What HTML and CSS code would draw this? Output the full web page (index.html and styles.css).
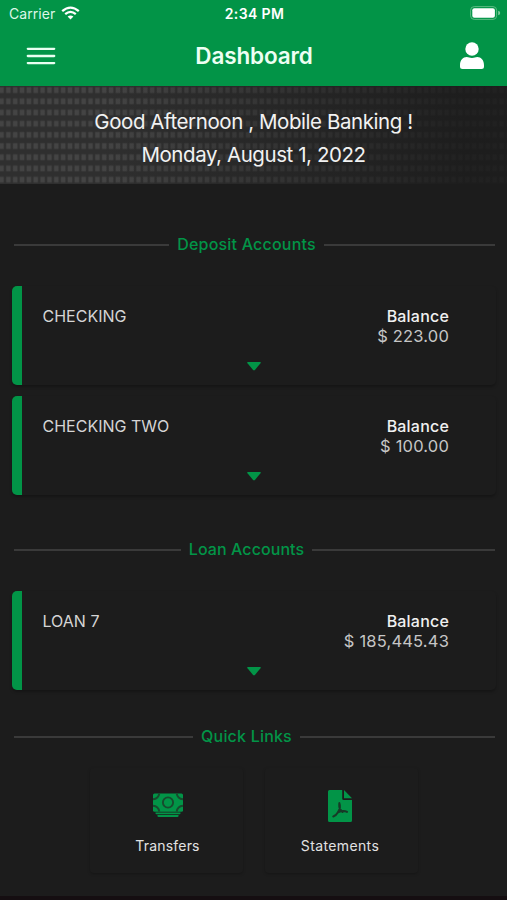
FILE: index.html
```html
<!DOCTYPE html>
<html lang="en">
<head>
<meta charset="utf-8">
<title>Dashboard</title>
<link rel="stylesheet" href="styles.css">
</head>
<body>
<header class="top">
  <div class="status">
    <div class="carrier"><span>Carrier</span>
      <svg width="19" height="14" viewBox="0 0 19 14" fill="none" stroke="#fff" stroke-width="2.3"><path d="M1.2 5.2Q9.5-2 17.8 5.2M4.2 8.2Q9.5 3.6 14.8 8.2"/><path d="M9.5 13.6L6.6 10.5Q9.5 8.3 12.4 10.5Z" fill="#fff" stroke="none"/></svg>
    </div>
    <span class="time">2:34 PM</span>
    <svg class="battery" width="31" height="14" viewBox="0 0 31 14"><rect x=".6" y=".6" width="26" height="12.8" rx="3.6" fill="none" stroke="#5bbb82"/><rect x="2.3" y="2.3" width="22.6" height="9.4" rx="2" fill="#fff"/><path d="M28.2 4.8q2 .5 2 2.2t-2 2.2z" fill="#7fca9e"/></svg>
  </div>
  <nav class="bar">
    <svg width="30" height="18" viewBox="0 0 30 18" stroke="#e9fff1" stroke-width="2.3" stroke-linecap="round"><path d="M1.8 1.8h26.4M1.8 9h26.4M1.8 16.1h26.4"/></svg>
    <h1>Dashboard</h1>
    <svg width="24" height="28" viewBox="0 0 24 28" fill="#fff"><circle cx="12" cy="7" r="6.7"/><path d="M0 23.2C0 18 3 15 6.7 15c2 0 2.8.9 5.3.9S15.300 15 17.300 15C21 15 24 18 24 23.200V24.500Q24 27 21.500 27H2.500Q0 27 0 24.500Z"/></svg>
  </nav>
</header>
<section class="hero">
  <p class="greet">Good Afternoon , Mobile Banking !</p>
  <p class="date">Monday, August 1, 2022</p>
</section>
<main>
  <h2 class="divider deposit"><span>Deposit Accounts</span></h2>
  <article class="card">
    <span class="name">CHECKING</span>
    <div class="balance"><b>Balance</b><span>$ 223.00</span></div>
    <svg class="caret" width="14" height="9" viewBox="0 0 14 9"><path d="M.8 0H13.200Q14.300 .3 13.500 1.300L7.900 8Q7 8.800 6.100 8L.5 1.300Q-.3 .3.8 0Z"/></svg>
  </article>
  <article class="card">
    <span class="name">CHECKING TWO</span>
    <div class="balance"><b>Balance</b><span>$ 100.00</span></div>
    <svg class="caret" width="14" height="9" viewBox="0 0 14 9"><path d="M.8 0H13.200Q14.300 .3 13.500 1.300L7.900 8Q7 8.800 6.100 8L.5 1.300Q-.3 .3.8 0Z"/></svg>
  </article>
  <h2 class="divider loan"><span>Loan Accounts</span></h2>
  <article class="card">
    <span class="name">LOAN 7</span>
    <div class="balance"><b>Balance</b><span>$ 185,445.43</span></div>
    <svg class="caret" width="14" height="9" viewBox="0 0 14 9"><path d="M.8 0H13.200Q14.300 .3 13.500 1.300L7.900 8Q7 8.800 6.100 8L.5 1.300Q-.3 .3.8 0Z"/></svg>
  </article>
  <h2 class="divider quick"><span>Quick Links</span></h2>
  <div class="tiles">
    <a class="tile transfers">
      <svg width="30" height="34" viewBox="0 0 30 34" fill="#029447"><rect y="4.500" width="30" height="18.200" rx="1.500"/><path d="M2.500 23.500h25v.8q0 .9-.9.9H3.400q-.9 0-.9-.9zM4.500 26.100h21v1q0 1-1 1h-19q-1 0-1-1z"/><g fill="none" stroke="#174b2e" stroke-width="1.900"><circle cx="15" cy="13.500" r="5.100"/><path d="M0 10.300q5.500-.6 6.300-5.800M30 10.300q-5.500-.6-6.300-5.800M0 16.700q5.500.3 6.300 6M30 16.700q-5.500.3-6.300 6"/></g></svg>
      <span>Transfers</span>
    </a>
    <a class="tile statements">
      <svg width="26" height="34" viewBox="0 0 26 34" fill="#029447"><path d="M2.500 1H15.200V9.500Q15.200 11 16.700 11H25V31.500Q25 33 23.500 33H2.500Q1 33 1 31.500V2.500Q1 1 2.500 1ZM17 1L25 9.200H17Z"/><path d="M12.300 14.200C13.500 17.500 12.500 21 11 23.200M12.300 15C12 18.500 13.200 21 15.500 23M6.300 27.500C8 27 10 24.800 11 23.200C14 22 18 21.700 20 22.800" fill="none" stroke="#173a27" stroke-width="2.100" stroke-linecap="round"/></svg>
      <span>Statements</span>
    </a>
  </div>
</main>
<footer class="edge"></footer>
</body>
</html>
```

FILE: styles.css
```css
* { box-sizing: border-box; }
body { margin: 0; width: 507px; height: 900px; overflow: hidden; background: #1c1c1c; color: #e2e2e2; font-family: Inter, "Liberation Sans", sans-serif; display: flex; flex-direction: column; }
h1, h2, p { margin: 0; }
svg { display: block; flex: none; }
.top { height: 86px; background: #029447; color: #fff; flex: none; }
.status { height: 28px; display: grid; grid-template-columns: 1fr auto 1fr; align-items: center; padding: 0 6px 0 9px; font-size: 14px; line-height: 28px; }
.carrier { display: flex; align-items: center; gap: 6px; color: #ddf7e7; letter-spacing: .05px; }
.carrier svg { margin-top: -2px; }
.time { font-weight: 600; letter-spacing: .4px; margin-right: 1px; }
.battery { justify-self: end; margin-top: -2px; }
.bar { height: 56px; display: grid; grid-template-columns: 1fr auto 1fr; align-items: center; padding: 0 23px 0 26px; }
.bar h1 { font-size: 22.5px; font-weight: 600; color: #edfff3; letter-spacing: -.15px; margin: 0 2px 2px 0; }
.bar svg:last-child { justify-self: end; }
.hero { height: 98px; flex: none; padding-top: 19px; text-align: center; font-size: 20.5px; line-height: 33px; letter-spacing: -.43px; color: #f2f2f2;
  background:
    linear-gradient(90deg, transparent 20%, #191919d0 92%),
    linear-gradient(#2f2f2f 0 4px, transparent 5.5px 9.7px, #2f2f2f 11.2px) 0 7.7px / 100% 11.2px,
    repeating-linear-gradient(90deg, #444 0 3px, #313131 4.4px 5.45px, #444 6.85px); }
main { height: 712px; flex: none; padding: 0 11px 0 12px; }
.divider { display: flex; align-items: center; gap: 8px; height: 24px; margin: 0 1px 0 2px; font-size: 16px; font-weight: 500; letter-spacing: .2px; color: #029447; }
.divider::before, .divider::after { content: ""; height: 2px; flex: 1 1 0; margin-top: 2px; background: #3a3a3a; }
.divider::after { flex-basis: 16px; }
.deposit { margin-top: 48px; margin-bottom: 30px; }
.loan { margin-top: 42px; margin-bottom: 30px; letter-spacing: .08px; }
.quick { margin-top: 34px; margin-bottom: 20px; }
.card { height: 99px; border-left: 10px solid #029447; border-radius: 5px; box-shadow: 0 2px 3px #0004; padding: 20px 47px 0 20.5px; display: grid; grid-template-columns: 1fr auto; grid-template-rows: 56px 9px; font-size: 16px; line-height: 20px; }
.card + .card { margin-top: 11px; }
.name { color: #d5d5d5; font-weight: 400; }
.balance { display: flex; flex-direction: column; align-items: flex-end; color: #c6c6c6; font-size: 16.5px; letter-spacing: .18px; line-height: 20px; }
.balance b { font-size: 16px; font-weight: 500; letter-spacing: .2px; color: #f0f0f0; }
.caret { grid-column: 1 / -1; justify-self: center; fill: #029447; margin-left: 17px; }
.tiles { display: flex; justify-content: center; gap: 22px; }
.tile { width: 153px; height: 105px; display: flex; flex-direction: column; align-items: center; box-shadow: 0 1px 3px #0004; border-radius: 4px; font-size: 14px; line-height: 20px; gap: 13px; }
.transfers { padding: 21px 0 0 2px; letter-spacing: .2px; }
.statements { padding: 21px 3px 0 0; letter-spacing: .38px; }
.edge { height: 4px; background: #150e11; }
```
